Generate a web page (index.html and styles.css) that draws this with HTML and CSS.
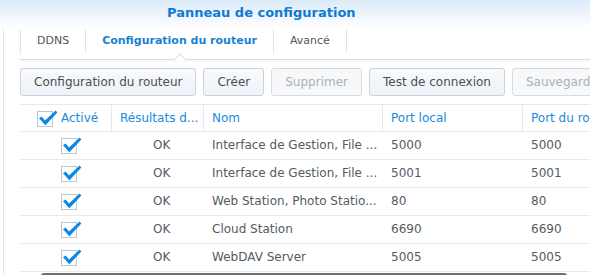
FILE: index.html
```html
<!DOCTYPE html>
<html lang="fr">

<head>
    <meta charset="UTF-8" />
    <title>Panneau de configuration</title>
    <link rel="stylesheet" href="styles.css">
</head>

<body>
    <div class="titlebar">
        <span class="title">Panneau de configuration</span>
    </div>

    <div class="window">
        <div class="tabs">
            <div class="tab">DDNS</div>
            <div class="tab active">Configuration du routeur</div>
            <div class="tab">Avancé</div>
        </div>

        <div class="toolbar">
            <button class="btn">Configuration du routeur</button>
            <button class="btn">Créer</button>
            <button class="btn disabled">Supprimer</button>
            <button class="btn">Test de connexion</button>
            <button class="btn disabled">Sauvegard</button>
        </div>

        <div class="grid">
            <div class="row head">
                <div class="cell check-head"><span class="box"><svg viewBox="0 0 20 17"><path d="M1 8.2 L3.6 6.6 L7 10.6 L17.6 0.6 L19.4 2.4 L7.4 15.2 Z"/></svg></span>Activé</div>
                <div class="cell">Résultats d...</div>
                <div class="cell">Nom</div>
                <div class="cell">Port local</div>
                <div class="cell">Port du ro</div>
            </div>
            <div class="row">
                <div class="cell check"><span class="box"><svg viewBox="0 0 20 17"><path d="M1 8.2 L3.6 6.6 L7 10.6 L17.6 0.6 L19.4 2.4 L7.4 15.2 Z"/></svg></span></div>
                <div class="cell status">OK</div>
                <div class="cell">Interface de Gestion, File ...</div>
                <div class="cell">5000</div>
                <div class="cell">5000</div>
            </div>
            <div class="row">
                <div class="cell check"><span class="box"><svg viewBox="0 0 20 17"><path d="M1 8.2 L3.6 6.6 L7 10.6 L17.6 0.6 L19.4 2.4 L7.4 15.2 Z"/></svg></span></div>
                <div class="cell status">OK</div>
                <div class="cell">Interface de Gestion, File ...</div>
                <div class="cell">5001</div>
                <div class="cell">5001</div>
            </div>
            <div class="row">
                <div class="cell check"><span class="box"><svg viewBox="0 0 20 17"><path d="M1 8.2 L3.6 6.6 L7 10.6 L17.6 0.6 L19.4 2.4 L7.4 15.2 Z"/></svg></span></div>
                <div class="cell status">OK</div>
                <div class="cell">Web Station, Photo Statio...</div>
                <div class="cell">80</div>
                <div class="cell">80</div>
            </div>
            <div class="row">
                <div class="cell check"><span class="box"><svg viewBox="0 0 20 17"><path d="M1 8.2 L3.6 6.6 L7 10.6 L17.6 0.6 L19.4 2.4 L7.4 15.2 Z"/></svg></span></div>
                <div class="cell status">OK</div>
                <div class="cell">Cloud Station</div>
                <div class="cell">6690</div>
                <div class="cell">6690</div>
            </div>
            <div class="row">
                <div class="cell check"><span class="box"><svg viewBox="0 0 20 17"><path d="M1 8.2 L3.6 6.6 L7 10.6 L17.6 0.6 L19.4 2.4 L7.4 15.2 Z"/></svg></span></div>
                <div class="cell status">OK</div>
                <div class="cell">WebDAV Server</div>
                <div class="cell">5005</div>
                <div class="cell">5005</div>
            </div>
        </div>
    </div>

    <div class="hscroll"></div>
</body>

</html>
```

FILE: styles.css
```css
html,
body {
    margin: 0;
    height: 275px;
    overflow: hidden;
}

body {
    font-family: "DejaVu Sans", Verdana, sans-serif;
    font-size: 12px;
    color: #535b63;
    background-color: #fff;
}

.titlebar {
    height: 28px;
    background: linear-gradient(#dbeaf8, #ffffff);
}

.title {
    display: block;
    padding-left: 167px;
    line-height: 26px;
    font-size: 13px;
    font-weight: bold;
    color: #0f7ad4;
}

.window {
    margin-left: 3px;
    padding-left: 16px;
    border-left: 1px solid #e3e7eb;
    height: 247px;
    overflow: hidden;
}

.tabs {
    display: flex;
    padding-top: 1px;
    padding-bottom: 6px;
    border-bottom: 1px solid #d9dfe5;
    box-shadow: 0 1px 2px rgba(0, 0, 0, 0.05);
}

.tab {
    position: relative;
    height: 24px;
    line-height: 24px;
    padding: 0 16px;
    font-size: 11px;
    color: #555;
    border-left: 1px solid #dde3e9;
}

.tab:last-child {
    border-right: 1px solid #dde3e9;
}

.tab.active {
    font-weight: bold;
    color: #1b7fd6;
}

.tab.active::after {
    content: "";
    position: absolute;
    top: 26px;
    left: 50%;
    width: 8px;
    height: 8px;
    margin-left: -4px;
    box-sizing: border-box;
    background-color: #fff;
    border-top: 1px solid #d9dfe5;
    border-left: 1px solid #d9dfe5;
    transform: rotate(45deg);
}

.toolbar {
    display: flex;
    gap: 7px;
    margin-top: 8px;
}

.btn {
    flex-shrink: 0;
    height: 28px;
    padding: 0 13px;
    font-family: inherit;
    font-size: 12px;
    color: #4a4f55;
    white-space: nowrap;
    background: linear-gradient(#f8fafc, #eef2f6);
    border: 1px solid #c9d1d9;
    border-radius: 3px;
}

.btn.disabled {
    color: #a9b1b9;
    border-color: #d5dbe1;
    background: #f6f8fa;
}

.grid {
    width: 720px;
    margin-top: 8px;
    border-top: 1px solid #e4e9ee;
}

.row {
    display: grid;
    grid-template-columns: 92px 92px 179px 140px 217px;
    height: 27px;
    line-height: 27px;
    border-bottom: 1px solid #e6eaee;
}

.row.head {
    height: 26px;
    line-height: 26px;
    color: #2289dc;
}

.cell {
    padding: 0 8px;
    white-space: nowrap;
}

.row.head .cell {
    border-right: 1px solid #e4e9ee;
}

.row.head .check-head {
    padding-left: 17px;
}

.check,
.status {
    padding-left: 41px;
}

.box {
    position: relative;
    display: inline-block;
    width: 16px;
    height: 16px;
    box-sizing: border-box;
    margin-right: 8px;
    vertical-align: middle;
    background-color: #fff;
    border: 1px solid #bcc8d3;
}

.box svg {
    position: absolute;
    left: 0;
    top: -2px;
    width: 20px;
    height: 17px;
    fill: #0d87e4;
}

.hscroll {
    position: absolute;
    left: 41px;
    top: 273px;
    width: 526px;
    height: 6px;
    background-color: #707070;
    border-radius: 3px;
}
```
